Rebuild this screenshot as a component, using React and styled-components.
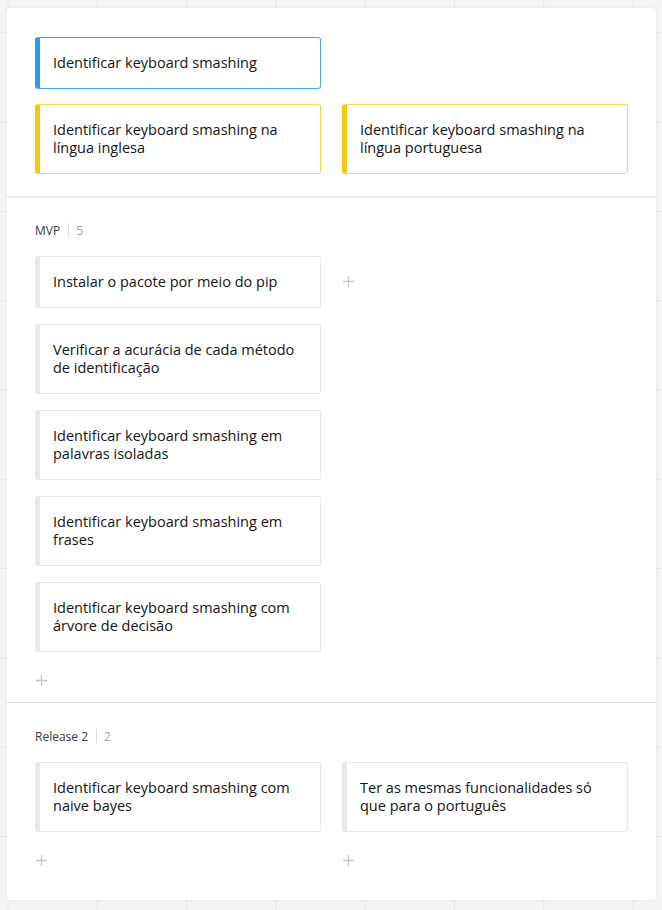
import React from "react";
import styled, { createGlobalStyle } from "styled-components";

const Global = createGlobalStyle`
  html, body { margin: 0; padding: 0; }
  body {
    background-color: #f3f3f3;
    background-image:
      linear-gradient(to right, #e6e6e6 1px, transparent 1px),
      linear-gradient(to bottom, #e6e6e6 1px, transparent 1px);
    background-size: 89.3px 89.3px;
    background-position: 7.5px 32.3px;
    font-family: "Open Sans", "Noto Sans", sans-serif;
    min-height: 910px;
  }
`;

const Page = styled.div`
  padding: 8px 6px 10px 7px;
`;

const Panel = styled.div`
  width: 649px;
  height: 892px;
  box-sizing: border-box;
  background: #fff;
  border-radius: 3px;
  box-shadow: 0 0 2px rgba(0, 0, 0, 0.1);
  display: flex;
  flex-direction: column;
  overflow: hidden;
`;

const Section = styled.section`
  padding: ${(p) => p.$pad};
  border-bottom: ${(p) => p.$divider || "none"};
  flex: ${(p) => (p.$grow ? "1" : "none")};
`;

const Label = styled.div`
  display: flex;
  align-items: center;
  height: 16px;
  font-size: 12px;
  color: #3a3a3a;
  margin-bottom: 18px;
`;

const LabelDivider = styled.span`
  width: 1px;
  height: 14px;
  background: #dadada;
  margin: 0 7px 0 8px;
`;

const Count = styled.span`
  color: #a3a3a3;
`;

const Columns = styled.div`
  display: grid;
  grid-template-columns: 286px 286px;
  column-gap: 21px;
  align-items: start;
`;

const Column = styled.div`
  display: flex;
  flex-direction: column;
  gap: ${(p) => p.$gap || 16}px;
`;

const Card = styled.div`
  box-sizing: border-box;
  border: 1px solid ${(p) => p.$border};
  border-left: 5px solid ${(p) => p.$accent};
  border-radius: 3px;
  background: #fff;
  padding: 16px 14px 16px 13px;
  font-size: 14.5px;
  line-height: 18px;
  color: #141414;
`;

const AddButton = styled.div`
  height: 20px;
  width: 12px;
  display: flex;
  align-items: center;
  justify-content: center;
  margin-top: ${(p) => (p.$empty ? 15 : 2)}px;
`;

const Spacer = styled.div`
  height: 52px;
`;

const tones = {
  blue: { border: "#4ba3ec", accent: "#2d9af0" },
  yellow: { border: "#fbd548", accent: "#fac710" },
  grey: { border: "#e8e8e8", accent: "#e8e8e8" },
};

const Plus = ({ empty }) => (
  <AddButton $empty={empty}>
    <svg width="11" height="11" viewBox="0 0 11 11">
      <path d="M5.5 0v11M0 5.5h11" stroke="#c6c6c6" strokeWidth="1.3" />
    </svg>
  </AddButton>
);

const Sticky = ({ tone = "grey", children }) => (
  <Card $border={tones[tone].border} $accent={tones[tone].accent}>
    {children}
  </Card>
);

export default function App() {
  return (
    <>
      <Global />
      <Page>
        <Panel>
          <Section $pad="29px 28px 22px" $divider="2px solid #e9e9e9">
            <Columns>
              <Column $gap={15}>
                <Sticky tone="blue">Identificar keyboard smashing</Sticky>
                <Sticky tone="yellow">
                  Identificar keyboard smashing na língua inglesa
                </Sticky>
              </Column>
              <Column $gap={15}>
                <Spacer />
                <Sticky tone="yellow">
                  Identificar keyboard smashing na língua portuguesa
                </Sticky>
              </Column>
            </Columns>
          </Section>

          <Section $pad="24px 28px 12px" $divider="1px solid #dcdcdc">
            <Label>
              MVP<LabelDivider />
              <Count>5</Count>
            </Label>
            <Columns>
              <Column>
                <Sticky>Instalar o pacote por meio do pip</Sticky>
                <Sticky>Verificar a acurácia de cada método de identificação</Sticky>
                <Sticky>Identificar keyboard smashing em palavras isoladas</Sticky>
                <Sticky>Identificar keyboard smashing  em frases</Sticky>
                <Sticky>Identificar keyboard smashing com árvore de decisão</Sticky>
                <Plus />
              </Column>
              <Column>
                <Plus empty />
              </Column>
            </Columns>
          </Section>

          <Section $pad="25px 28px 0" $grow>
            <Label>
              Release 2<LabelDivider />
              <Count>2</Count>
            </Label>
            <Columns>
              <Column>
                <Sticky>Identificar keyboard smashing com naive bayes</Sticky>
                <Plus />
              </Column>
              <Column>
                <Sticky>Ter as mesmas funcionalidades só que para o português</Sticky>
                <Plus />
              </Column>
            </Columns>
          </Section>
        </Panel>
      </Page>
    </>
  );
}
